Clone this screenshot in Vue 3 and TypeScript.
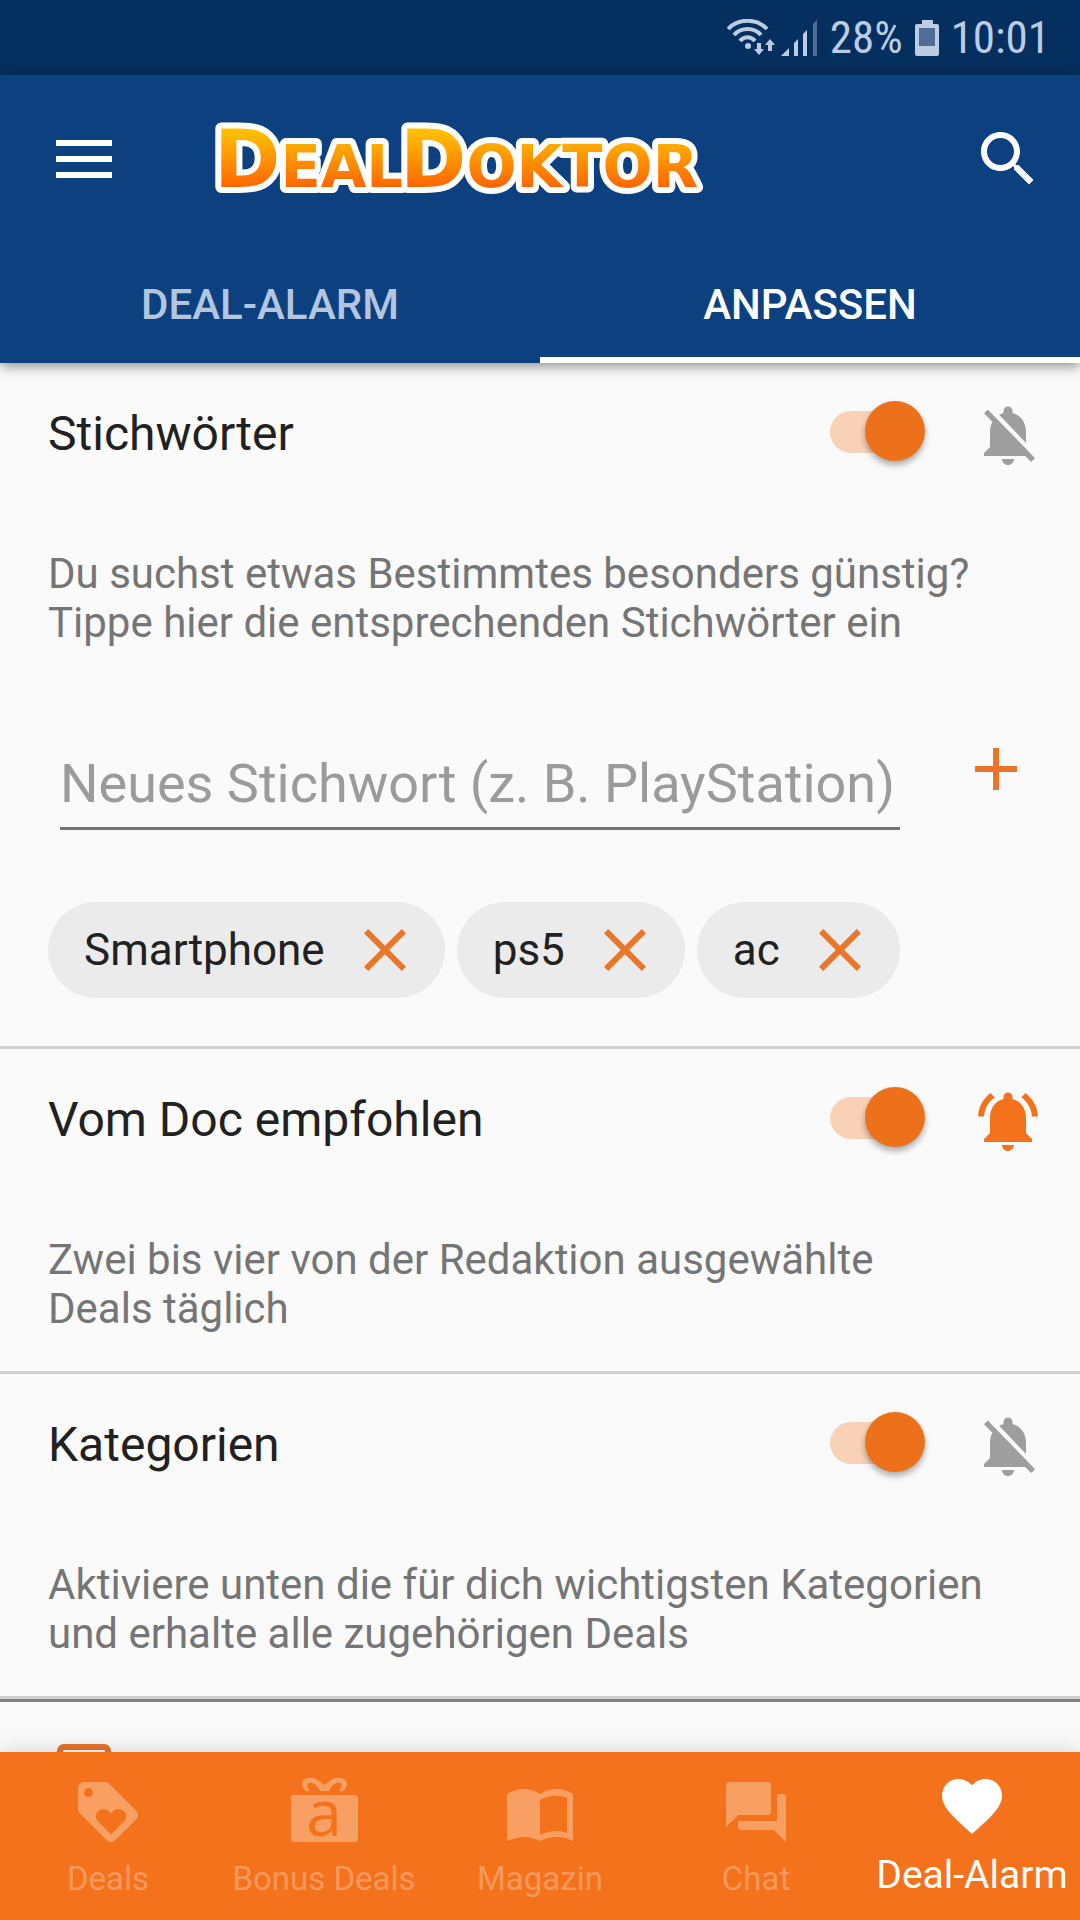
<script setup lang="ts">
import { ref } from 'vue'

interface Section {
  id: string
  title: string
  text: string
  enabled: boolean
  notify: boolean
}

interface NavItem {
  id: string
  label: string
}

const sections = ref<Section[]>([
  {
    id: 'keywords',
    title: 'Stichwörter',
    text: 'Du suchst etwas Bestimmtes besonders günstig? Tippe hier die entsprechenden Stichwörter ein',
    enabled: true,
    notify: false,
  },
  {
    id: 'recommended',
    title: 'Vom Doc empfohlen',
    text: 'Zwei bis vier von der Redaktion ausgewählte Deals täglich',
    enabled: true,
    notify: true,
  },
  {
    id: 'categories',
    title: 'Kategorien',
    text: 'Aktiviere unten die für dich wichtigsten Kategorien und erhalte alle zugehörigen Deals',
    enabled: true,
    notify: false,
  },
])

const keywords = ref<string[]>(['Smartphone', 'ps5', 'ac'])
const draft = ref('')

const navItems: NavItem[] = [
  { id: 'deals', label: 'Deals' },
  { id: 'bonus', label: 'Bonus Deals' },
  { id: 'magazine', label: 'Magazin' },
  { id: 'chat', label: 'Chat' },
  { id: 'alarm', label: 'Deal-Alarm' },
]
const activeNav = 'alarm'

function addKeyword(): void {
  const value = draft.value.trim()
  if (value && !keywords.value.includes(value)) keywords.value.push(value)
  draft.value = ''
}

function removeKeyword(word: string): void {
  keywords.value = keywords.value.filter((k) => k !== word)
}
</script>

<template>
  <div class="screen">
    <div class="status">
      <svg class="wifi" width="50" height="38" viewBox="0 0 50 38" aria-hidden="true">
        <g fill="none" stroke="currentColor" stroke-width="4">
          <path d="M1 10C11 -1 30 -1 40 10" />
          <path d="M7 16C14 8 27 8 34 16" />
          <path d="M13 22C17 17 24 17 28 22" />
        </g>
        <circle cx="21" cy="27" r="3" fill="currentColor" />
        <path d="M30 24h4v6h3l-5 6-5-6h3zM41 32h4v-6h3l-5-6-5 6h3z" fill="currentColor" />
      </svg>
      <svg class="signal" width="36" height="38" viewBox="0 0 36 38" aria-hidden="true">
        <g fill="currentColor">
          <path d="M0 37l8-8v8z" />
          <path d="M13 24l4-4v17h-4z" />
          <path d="M22 15l4-4v26h-4z" />
          <path d="M32 5l4-4v36h-4z" opacity=".4" />
        </g>
      </svg>
      <span class="percent">28%</span>
      <svg class="battery" width="24" height="38" viewBox="0 0 24 38" aria-hidden="true">
        <path d="M7 1h11v4h4a2 2 0 0 1 2 2v28a2 2 0 0 1-2 2H2a2 2 0 0 1-2-2V7a2 2 0 0 1 2-2h5z" fill="currentColor" />
        <path d="M4 9h16v18H4z" fill="#506e95" />
      </svg>
      <span>10:01</span>
    </div>

    <header class="header">
      <div class="toolbar">
        <button class="icon-button menu" type="button" aria-label="Menü">
          <svg width="56" height="38" viewBox="0 0 56 38"><path d="M0 0h56v6H0zM0 16h56v6H0zM0 32h56v6H0z" fill="currentColor" /></svg>
        </button>
        <svg class="logo" width="530" height="120" viewBox="0 0 530 120" role="img" aria-label="DealDoktor">
          <defs>
            <linearGradient id="logo-fill" gradientUnits="userSpaceOnUse" x1="0" y1="30" x2="0" y2="88">
              <stop offset="0" stop-color="#ffc400" />
              <stop offset="1" stop-color="#ff6600" />
            </linearGradient>
          </defs>
          <text class="logo-text" x="14" y="88">D<tspan class="logo-small">EAL</tspan></text>
          <text class="logo-text" x="200" y="88">D<tspan class="logo-small">OKTOR</tspan></text>
        </svg>
        <button class="icon-button search" type="button" aria-label="Suche">
          <svg width="72" height="72" viewBox="0 0 24 24"><path fill="currentColor" d="M15.5 14h-.79l-.28-.27C15.41 12.59 16 11.11 16 9.5 16 5.91 13.09 3 9.5 3S3 5.91 3 9.5 5.91 16 9.5 16c1.61 0 3.09-.59 4.23-1.57l.27.28v.79l5 4.99L20.49 19l-4.99-5zm-6 0C7.01 14 5 11.99 5 9.5S7.01 5 9.5 5 14 7.01 14 9.5 11.99 14 9.5 14z" /></svg>
        </button>
      </div>
      <nav class="tabs">
        <a class="tab" href="#alarm">DEAL-ALARM</a>
        <a class="tab tab-active" href="#anpassen" aria-current="page">ANPASSEN</a>
      </nav>
    </header>

    <main class="content">
      <section v-for="section in sections" :key="section.id" class="section">
        <div class="section-head">
          <label class="section-title" :for="`switch-${section.id}`">{{ section.title }}</label>
          <input :id="`switch-${section.id}`" v-model="section.enabled" class="switch" type="checkbox" role="switch" />
          <button
            class="icon-button bell"
            :class="{ 'bell-on': section.notify }"
            type="button"
            aria-label="Benachrichtigung"
            @click="section.notify = !section.notify"
          >
            <svg width="72" height="72" viewBox="0 0 24 24" fill="currentColor">
              <path v-if="section.notify" d="M7.58 4.08L6.15 2.65C3.75 4.48 2.17 7.3 2.03 10.5h2c.15-2.65 1.51-4.97 3.55-6.42zm12.39 6.42h2c-.15-3.2-1.73-6.02-4.12-7.85l-1.42 1.43c2.02 1.45 3.39 3.77 3.54 6.42zM18 11c0-3.07-1.64-5.64-4.5-6.32V4c0-.83-.67-1.5-1.5-1.5s-1.5.67-1.5 1.5v.68C7.63 5.36 6 7.92 6 11v5l-2 2v1h16v-1l-2-2v-5zm-6 11c.14 0 .27-.01.4-.04.65-.14 1.18-.58 1.44-1.18.1-.24.15-.5.15-.78h-4c.01 1.1.9 2 2.01 2z" />
              <path v-else d="M20 18.69L7.84 6.14 5.27 3.49 4 4.76l2.8 2.8v.01c-.52.99-.8 2.16-.8 3.42v5l-2 2v1h13.73l2 2L21 19.73l-1-1.04zM12 22c1.11 0 2-.89 2-2h-4c0 1.11.89 2 2 2zm6-7.32V11c0-3.08-1.64-5.64-4.5-6.32V4c0-.83-.67-1.5-1.5-1.5s-1.5.67-1.5 1.5v.68c-.15.03-.29.08-.42.12-.1.03-.2.07-.3.11h-.01c-.01 0-.01 0-.02.01-.23.09-.46.2-.68.31 0 0-.01 0-.01.01L18 14.68z" />
            </svg>
          </button>
        </div>
        <p class="section-text">{{ section.text }}</p>

        <template v-if="section.id === 'keywords'">
          <form class="keyword-form" @submit.prevent="addKeyword">
            <input v-model="draft" class="keyword-input" type="text" aria-label="Neues Stichwort" placeholder="Neues Stichwort (z. B. PlayStation)" />
            <button class="icon-button add" type="submit" aria-label="Hinzufügen">
              <svg width="72" height="72" viewBox="0 0 24 24"><path fill="currentColor" d="M19 13h-6v6h-2v-6H5v-2h6V5h2v6h6z" /></svg>
            </button>
          </form>
          <ul class="chips">
            <li v-for="word in keywords" :key="word" class="chip">
              <span>{{ word }}</span>
              <button class="icon-button remove" type="button" :aria-label="`${word} entfernen`" @click="removeKeyword(word)">
                <svg width="72" height="72" viewBox="0 0 24 24"><path fill="currentColor" d="M19 6.41L17.59 5 12 10.59 6.41 5 5 6.41 10.59 12 5 17.59 6.41 19 12 13.41 17.59 19 19 17.59 13.41 12z" /></svg>
              </button>
            </li>
          </ul>
        </template>
      </section>

      <div class="category-list">
        <svg width="72" height="72" viewBox="0 0 72 72" aria-hidden="true">
          <rect x="12" y="9" width="48" height="54" rx="4" fill="none" stroke="#e8742a" stroke-width="6" />
        </svg>
      </div>
    </main>

    <nav class="bottom-nav">
      <a
        v-for="item in navItems"
        :key="item.id"
        class="nav-item"
        :class="{ 'nav-active': item.id === activeNav }"
        :href="`#${item.id}`"
      >
        <svg class="nav-icon" width="72" height="72" viewBox="0 0 72 72" fill="currentColor" aria-hidden="true">
          <g v-if="item.id === 'deals'" transform="scale(3)">
            <path d="M21.41 11.58l-9-9C12.05 2.22 11.55 2 11 2H4c-1.1 0-2 .9-2 2v7c0 .55.22 1.05.59 1.42l9 9c.36.36.86.58 1.41.58.55 0 1.05-.22 1.41-.59l7-7c.37-.36.59-.86.59-1.41 0-.55-.23-1.06-.59-1.42zM5.5 7C4.67 7 4 6.33 4 5.5S4.67 4 5.5 4 7 4.67 7 5.5 6.33 7 5.5 7zm11.77 8.27L13 19.54l-4.27-4.27C8.28 14.81 8 14.19 8 13.5c0-1.38 1.12-2.5 2.5-2.5.69 0 1.32.28 1.77.74l.73.72.73-.73c.45-.45 1.08-.73 1.77-.73 1.38 0 2.5 1.12 2.5 2.5 0 .69-.28 1.32-.73 1.77z" />
          </g>
          <g v-else-if="item.id === 'bonus'">
            <rect x="3" y="19" width="67" height="47" rx="3" />
            <path fill-rule="evenodd" d="M18 15C12 10 13 3 20 2C27 1 31 5 36.5 9C42 5 46 1 53 2C60 3 61 10 55 15zM22 15C17 9 20 6 24 7C28 8 31 12 32 15zM51 15C56 9 53 6 49 7C45 8 42 12 41 15z" />
            <text class="bonus-letter" x="36" y="60" text-anchor="middle">a</text>
          </g>
          <g v-else-if="item.id === 'magazine'">
            <path fill-rule="evenodd" d="M3 18Q20 8 36 18Q53 8 69 18V65Q53 57 36 65Q20 57 3 65zM36 24V59Q50 52 63 57V22Q50 16 36 24z" />
          </g>
          <g v-else-if="item.id === 'chat'" transform="scale(3)">
            <path d="M21 6h-2v9H6v2c0 .55.45 1 1 1h11l4 4V7c0-.55-.45-1-1-1zm-4 6V3c0-.55-.45-1-1-1H3c-.55 0-1 .45-1 1v14l4-4h10c.55 0 1-.45 1-1z" />
          </g>
          <g v-else transform="scale(3)">
            <path d="M12 21.35l-1.45-1.32C5.4 15.36 2 12.28 2 8.5 2 5.42 4.42 3 7.5 3c1.74 0 3.41.81 4.5 2.09C13.09 3.81 14.76 3 16.5 3 19.58 3 22 5.42 22 8.5c0 3.78-3.4 6.86-8.55 11.54L12 21.35z" />
          </g>
        </svg>
        <span class="nav-label">{{ item.label }}</span>
      </a>
    </nav>
  </div>
</template>

<style>
body {
  margin: 0;
  background: #fafafa;
}
</style>

<style scoped>
.screen {
  display: flex;
  flex-direction: column;
  height: 100vh;
  overflow: hidden;
  background: #fafafa;
  color: #212121;
  font-family: Roboto, 'Noto Sans', sans-serif;
  font-size: 42px;
}

.status {
  display: flex;
  flex: none;
  align-items: center;
  justify-content: flex-end;
  height: 75px;
  padding-right: 30px;
  background: #052f5f;
  color: #bccde3;
  font-family: 'Roboto Condensed', 'Liberation Sans Narrow', Roboto, sans-serif;
  font-size: 45px;
}

.signal {
  margin-left: 4px;
}

.percent {
  margin-left: 13px;
}

.battery {
  margin: 0 12px;
}

.header {
  position: relative;
  z-index: 1;
  flex: none;
  background: #0c407f;
  box-shadow: 0 3px 12px rgba(0, 0, 0, 0.45);
}

.toolbar {
  display: flex;
  align-items: center;
  height: 168px;
  padding: 0 36px 0 56px;
}

.icon-button {
  display: flex;
  flex: none;
  padding: 0;
  border: 0;
  background: none;
  color: inherit;
  cursor: pointer;
}

.menu,
.search {
  color: #fff;
}

.logo {
  margin-left: 88px;
  overflow: visible;
}

.search {
  margin-left: auto;
}

.logo-text {
  fill: url(#logo-fill);
  stroke: #fff;
  stroke-width: 12px;
  stroke-linejoin: round;
  paint-order: stroke;
  font-family: 'DejaVu Sans', sans-serif;
  font-size: 80px;
  font-weight: 700;
  font-kerning: none;
}

.logo-small {
  font-size: 59px;
}

.tabs {
  display: flex;
  height: 120px;
}

.tab {
  box-sizing: border-box;
  display: flex;
  flex: 1;
  align-items: center;
  justify-content: center;
  padding-top: 8px;
  border-bottom: 6px solid transparent;
  color: #b2c6e0;
  font-weight: 500;
  text-decoration: none;
}

.tab-active {
  border-color: #fff;
  color: #fff;
}

.content {
  flex: 1;
  min-height: 0;
  overflow: hidden;
}

.section {
  padding-bottom: 38px;
  border-bottom: 3px solid #d0d0d0;
}

.section-head {
  display: flex;
  align-items: center;
  height: 144px;
  padding: 0 36px 0 48px;
}

.section-title {
  flex: 1;
  padding-bottom: 4px;
  font-size: 48px;
}

.switch {
  position: relative;
  width: 96px;
  height: 60px;
  margin: 0 46px 8px 0;
  appearance: none;
  cursor: pointer;
}

.switch::before {
  position: absolute;
  top: 10px;
  left: 0;
  width: 90px;
  height: 42px;
  border-radius: 21px;
  background: #d0d0d0;
  content: '';
}

.switch::after {
  position: absolute;
  top: 0;
  left: 0;
  width: 60px;
  height: 60px;
  border-radius: 50%;
  background: #f1f1f1;
  box-shadow: 0 4px 6px rgba(0, 0, 0, 0.32);
  content: '';
}

.switch:checked::before {
  background: #f9d1b7;
}

.switch:checked::after {
  left: 35px;
  background: #ed711b;
}

.bell {
  color: #9e9e9e;
}

.bell-on {
  color: #f4721b;
}

.section-text {
  margin: 42px 96px 0 48px;
  color: #757575;
  line-height: 49px;
}

.keyword-form {
  display: flex;
  gap: 60px;
  align-items: flex-end;
  height: 97px;
  margin: 86px 48px 0 60px;
}

.keyword-input {
  flex: 1;
  min-width: 0;
  height: 63px;
  padding: 0 0 12px;
  border: 0;
  border-bottom: 3px solid #757575;
  border-radius: 0;
  outline: 0;
  background: none;
  color: #212121;
  font: inherit;
  font-size: 54px;
}

.keyword-input::placeholder {
  color: #9b9b9b;
  opacity: 1;
}

.add {
  align-self: flex-start;
  color: #ec742a;
}

.chips {
  display: flex;
  flex-wrap: wrap;
  gap: 12px;
  margin: 72px 48px 10px;
  padding: 0;
  list-style: none;
}

.chip {
  display: flex;
  gap: 24px;
  align-items: center;
  height: 96px;
  padding: 0 24px 0 36px;
  border-radius: 48px;
  background: #ebebeb;
  font-size: 44px;
}

.remove {
  color: #e8772c;
}

.category-list {
  padding: 36px 48px;
  border-top: 3px solid #808080;
}

.bottom-nav {
  position: relative;
  z-index: 1;
  display: flex;
  flex: none;
  height: 168px;
  background: #f4721b;
  box-shadow: 0 0 24px rgba(0, 0, 0, 0.16);
}

.nav-item {
  display: flex;
  flex: 1 1 0;
  flex-direction: column;
  align-items: center;
  min-width: 0;
  padding-top: 24px;
  color: #f89f64;
  text-decoration: none;
}

.nav-icon {
  overflow: visible;
}

.nav-label {
  color: #f6995c;
  font-size: 33px;
  line-height: 62px;
  white-space: nowrap;
}

.nav-active {
  padding-top: 18px;
  color: #fff;
}

.nav-active .nav-label {
  color: #fff;
  font-size: 39px;
  line-height: 66px;
}

.bonus-letter {
  fill: #f4721b;
  font-family: 'Open Sans', sans-serif;
  font-size: 64px;
}
</style>
